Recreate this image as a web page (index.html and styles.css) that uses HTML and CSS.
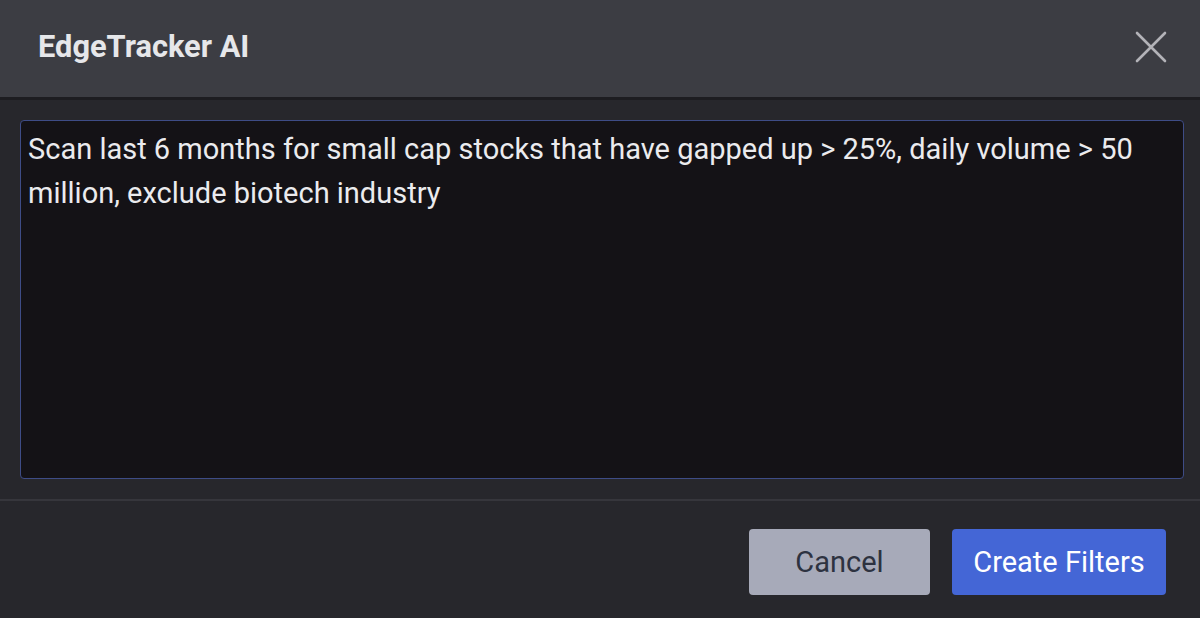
FILE: index.html
```html
<!DOCTYPE html>
<html>
<head>
<meta charset="utf-8">
<link rel="stylesheet" href="styles.css">
</head>
<body>
<div class="dialog">
  <header class="head">
    <h1 class="title">EdgeTracker AI</h1>
    <button class="close" aria-label="Close">
      <svg width="32" height="32" viewBox="0 0 32 32"><path d="M2 2 L30 30 M30 2 L2 30" stroke="#b3b3b8" stroke-width="2.6" stroke-linecap="round" fill="none"/></svg>
    </button>
  </header>
  <section class="body">
    <div class="prompt">Scan last 6 months for small cap stocks that have gapped up &gt; 25%, daily volume &gt; 50 million, exclude biotech industry</div>
  </section>
  <footer class="foot">
    <button class="btn cancel">Cancel</button>
    <button class="btn create">Create Filters</button>
  </footer>
</div>
</body>
</html>
```

FILE: styles.css
```css
html, body {
  margin: 0;
  padding: 0;
  background: #27272c;
}
.dialog {
  width: 1200px;
  height: 618px;
  display: flex;
  flex-direction: column;
  font-family: Roboto, "Liberation Sans", sans-serif;
  background: #27272c;
}
.head {
  box-sizing: border-box;
  border-bottom: 3px solid #1d1d21;
  background: #3c3d43;
  display: flex;
  align-items: center;
  justify-content: space-between;
  padding: 0 33px 0 38px;
  height: 100px;
}
.title {
  margin: 0;
  font-size: 30.8px;
  font-weight: 700;
  color: #e6e7ea;
  padding-bottom: 4px;
}
.close {
  background: none;
  border: 0;
  padding: 0;
  width: 32px;
  height: 32px;
  display: flex;
  margin-bottom: 4px;
}
.body {
  padding: 20px 16px 20px 20px;
  border-bottom: 2px solid #36363c;
}
.prompt {
  height: 359px;
  box-sizing: border-box;
  background: #141216;
  border: 1.5px solid #3e4c86;
  border-radius: 4px;
  color: #ebebee;
  font-size: 29px;
  line-height: 44px;
  padding: 6px 20px 0 7px;
}
.foot {
  flex: 1;
  display: flex;
  justify-content: flex-end;
  align-items: flex-start;
  gap: 22px;
  padding: 28px 34px 0 0;
}
.btn {
  height: 66px;
  border: 0;
  border-radius: 4px;
  font-family: Roboto, "Liberation Sans", sans-serif;
  font-size: 29px;
  cursor: pointer;
}
.cancel {
  width: 181px;
  background: #a7aab9;
  color: #2d3240;
}
.create {
  width: 214px;
  background: #4466d6;
  color: #ffffff;
}
```
